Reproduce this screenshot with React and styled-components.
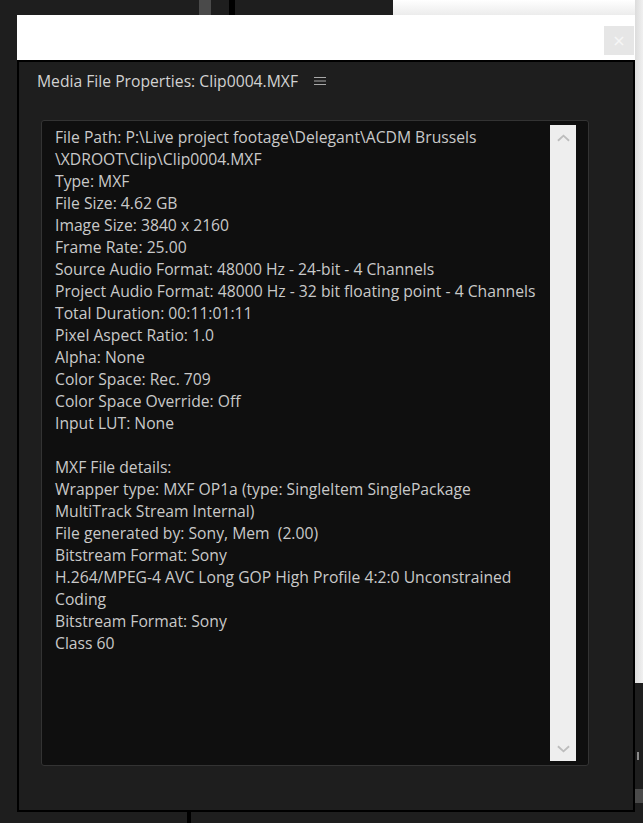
import React from "react";
import styled, { createGlobalStyle } from "styled-components";

const GlobalStyle = createGlobalStyle`
  html, body {
    margin: 0;
    padding: 0;
    background: #1e1e1e;
  }
  body {
    font-family: "Open Sans", "Noto Sans", sans-serif;
  }
`;

const lines = [
  "File Path: P:\\Live project footage\\Delegant\\ACDM Brussels",
  "\\XDROOT\\Clip\\Clip0004.MXF",
  "Type: MXF",
  "File Size: 4.62 GB",
  "Image Size: 3840 x 2160",
  "Frame Rate: 25.00",
  "Source Audio Format: 48000 Hz - 24-bit - 4 Channels",
  "Project Audio Format: 48000 Hz - 32 bit floating point - 4 Channels",
  "Total Duration: 00:11:01:11",
  "Pixel Aspect Ratio: 1.0",
  "Alpha: None",
  "Color Space: Rec. 709",
  "Color Space Override: Off",
  "Input LUT: None",
  "",
  "MXF File details:",
  "Wrapper type: MXF OP1a (type: SingleItem SinglePackage",
  "MultiTrack Stream Internal)",
  "File generated by: Sony, Mem  (2.00)",
  "Bitstream Format: Sony",
  "H.264/MPEG-4 AVC Long GOP High Profile 4:2:0 Unconstrained",
  "Coding",
  "Bitstream Format: Sony",
  "Class 60",
];

function App() {
  return (
    <Page>
      <GlobalStyle />
      <Backdrop>
        <Splitter />
        <Divider />
        <OtherWindow />
        <EdgeStrip />
        <EdgeTick />
        <EdgeBar />
        <BottomDivider />
      </Backdrop>
      <Dialog>
        <TitleBar>
          <CloseButton aria-label="Close">×</CloseButton>
        </TitleBar>
        <Panel>
          <Header>
            <Title>Media File Properties: Clip0004.MXF</Title>
            <MenuIcon viewBox="0 0 12 12">
              <path d="M0 2.5h12M0 6h12M0 9.5h12" stroke="#a8a8a8" strokeWidth="1.2" />
            </MenuIcon>
          </Header>
          <ContentBox>
            <Text>
              {lines.map((l, i) => (
                <Line key={i}>{l || "\u00a0"}</Line>
              ))}
            </Text>
            <Scrollbar>
              <Chevron viewBox="0 0 14 8">
                <path d="M1 7L7 1.5L13 7" fill="none" stroke="#bdbdbd" strokeWidth="2" />
              </Chevron>
              <Chevron viewBox="0 0 14 8">
                <path d="M1 1L7 6.5L13 1" fill="none" stroke="#bdbdbd" strokeWidth="2" />
              </Chevron>
            </Scrollbar>
          </ContentBox>
        </Panel>
      </Dialog>
    </Page>
  );
}

const Page = styled.div`
  position: relative;
  width: 643px;
  height: 823px;
  overflow: hidden;
  background: #1e1e1e;
  padding: 15px 8px 0 17px;
  box-sizing: border-box;
`;

const Backdrop = styled.div`
  position: absolute;
  inset: 0;
  z-index: 0;
`;

const Splitter = styled.div`
  position: absolute;
  left: 199px;
  top: 0;
  width: 12px;
  height: 15px;
  background: #4a4a4a;
`;

const Divider = styled.div`
  position: absolute;
  left: 229px;
  top: 0;
  width: 6px;
  height: 15px;
  background: #000;
`;

const OtherWindow = styled.div`
  position: absolute;
  left: 393px;
  top: 0;
  right: 0;
  height: 15px;
  background: linear-gradient(#ffffff, #ececec);
`;

const EdgeStrip = styled.div`
  position: absolute;
  right: 0;
  top: 0;
  width: 8px;
  height: 683px;
  background: linear-gradient(90deg, #dcdcdc, #f0f0f0);
`;

const EdgeTick = styled.div`
  position: absolute;
  right: 4px;
  top: 752px;
  width: 2px;
  height: 8px;
  background: #8a8a8a;
`;

const EdgeBar = styled.div`
  position: absolute;
  right: 0;
  top: 789px;
  width: 8px;
  height: 14px;
  background: #4a4a4a;
`;

const BottomDivider = styled.div`
  position: absolute;
  left: 187px;
  top: 812px;
  width: 4px;
  height: 11px;
  background: #000;
`;

const Dialog = styled.div`
  position: relative;
  z-index: 1;
  width: 618px;
  display: flex;
  flex-direction: column;
`;

const TitleBar = styled.div`
  height: 45px;
  background: #ffffff;
  display: flex;
  justify-content: flex-end;
  align-items: flex-start;
  padding: 11px 1px 0 0;
  box-sizing: border-box;
`;

const CloseButton = styled.button`
  width: 30px;
  height: 29px;
  border: none;
  padding: 0;
  background: #e6e6e6;
  color: #f6f6f6;
  font-family: "DejaVu Sans", sans-serif;
  font-size: 16px;
  line-height: 29px;
  cursor: pointer;
`;

const Panel = styled.div`
  height: 752px;
  background: #1e1e1e;
  border: 2px solid #000;
  box-sizing: border-box;
  display: flex;
  flex-direction: column;
  padding: 0 44px 0 22px;
`;

const Header = styled.div`
  height: 38px;
  display: flex;
  align-items: center;
  gap: 16px;
  margin-left: -4px;
  margin-bottom: 20px;
`;

const Title = styled.div`
  font-family: "Open Sans", sans-serif;
  font-size: 15.7px;
  color: #d2d2d2;
`;

const MenuIcon = styled.svg`
  width: 12px;
  height: 12px;
`;

const ContentBox = styled.div`
  height: 646px;
  background: #0f0f0f;
  border: 1px solid #333333;
  border-radius: 3px;
  box-sizing: border-box;
  display: flex;
  padding: 4px 12px 4px 13px;
`;

const Text = styled.div`
  flex: 1;
  padding-top: 1px;
  font-family: "Open Sans", sans-serif;
  font-size: 15.7px;
  line-height: 22px;
  color: #c9c9c9;
`;

const Line = styled.div`
  white-space: pre;
`;

const Scrollbar = styled.div`
  width: 26px;
  background: #eeeeee;
  display: flex;
  flex-direction: column;
  justify-content: space-between;
  align-items: center;
  padding: 9px 0 8px;
  box-sizing: border-box;
`;

const Chevron = styled.svg`
  width: 13px;
  height: 8px;
`;

export default App;
